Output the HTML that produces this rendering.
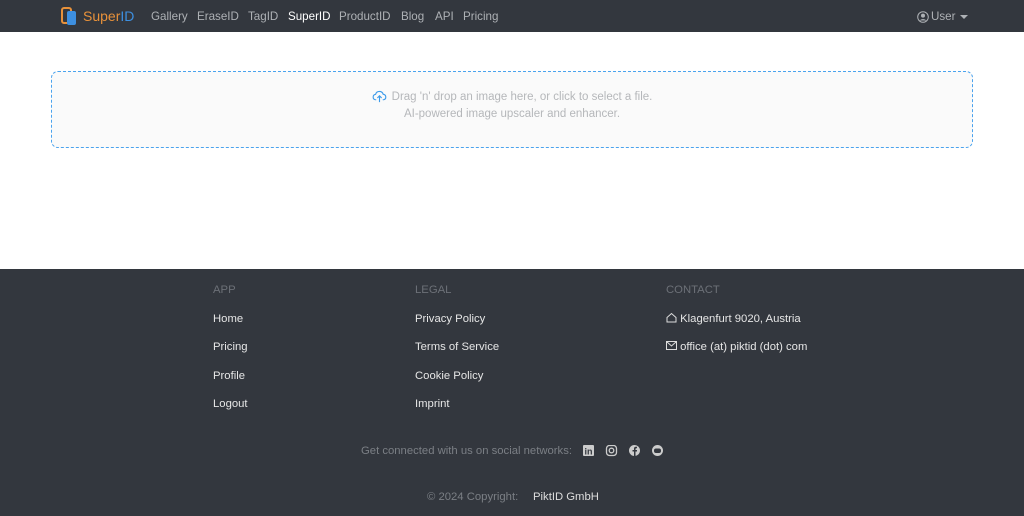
<!DOCTYPE html>
<html><head><style>
*{margin:0;padding:0;box-sizing:border-box}
body{width:1024px;height:516px;overflow:hidden;font-family:"Liberation Sans",sans-serif;background:#fff}
.nav{height:32px;background:#33373e;position:relative;color:#aeb1b5;font-size:11.6px}
.nav .a{position:absolute;top:10px}
.drop{position:absolute;left:51px;top:71px;width:922px;height:77px;border:1.5px dashed #4aa3ee;border-radius:7px;background:#fafafa;text-align:center;color:#b5b7ba;font-size:11.5px}
footer{position:absolute;top:269px;left:0;width:1024px;height:247px;background:#33373e;color:#e6e6e6;font-size:11.3px}
footer .t{position:absolute}
.h{color:#6c7077}
.g{color:#7b7f85}
</style></head><body>
<div class="nav">
<svg style="position:absolute;left:61px;top:7px" width="16" height="19" viewBox="0 0 16 19"><rect x="1" y="1" width="9" height="15" rx="2" fill="none" stroke="#e8913a" stroke-width="2"/><rect x="6" y="4" width="9" height="14" rx="2" fill="#3d8fe0"/></svg>
<span class="a" style="left:83px;top:8px;font-size:14px;color:#e8913a">Super<span style="color:#3d8fe0">ID</span></span>
<span class="a" style="left:151px">Gallery</span>
<span class="a" style="left:197px">EraseID</span>
<span class="a" style="left:248px">TagID</span>
<span class="a" style="left:288px;color:#fff">SuperID</span>
<span class="a" style="left:339px">ProductID</span>
<span class="a" style="left:401px">Blog</span>
<span class="a" style="left:435px">API</span>
<span class="a" style="left:463px">Pricing</span>
<svg style="position:absolute;left:917px;top:11px" width="12" height="12" viewBox="0 0 12 12"><circle cx="6" cy="6" r="5.3" fill="none" stroke="#aeb1b5"/><circle cx="6" cy="4.6" r="2" fill="#aeb1b5"/><path d="M2.5 9.5Q6 6.5 9.5 9.5" fill="#aeb1b5"/></svg>
<span class="a" style="left:931px">User</span>
<span class="a" style="left:960px;top:15px;width:0;height:0;border-left:4px solid transparent;border-right:4px solid transparent;border-top:4px solid #aeb1b5"></span>
</div>
<div class="drop">
<div style="margin-top:18px"><svg style="vertical-align:-3px;margin-right:5px" width="15" height="13" viewBox="0 0 16 14"><path d="M4.5 10.5H3.5A3 3 0 0 1 3.8 4.6 4.3 4.3 0 0 1 12 4.6 3 3 0 0 1 12.5 10.5H11.5M8 13V6.5M5.7 8.6 8 6.3 10.3 8.6" fill="none" stroke="#3c9bea" stroke-width="1.2"/></svg>Drag 'n' drop an image here, or click to select a file.</div>
<div style="margin-top:5px">AI-powered image upscaler and enhancer.</div>
</div>
<footer>
<span class="t h" style="left:213px;top:15px">APP</span>
<span class="t" style="left:213px;top:44px">Home</span>
<span class="t" style="left:213px;top:72px">Pricing</span>
<span class="t" style="left:213px;top:101px">Profile</span>
<span class="t" style="left:213px;top:129px">Logout</span>
<span class="t h" style="left:415px;top:15px">LEGAL</span>
<span class="t" style="left:415px;top:44px">Privacy Policy</span>
<span class="t" style="left:415px;top:72px">Terms of Service</span>
<span class="t" style="left:415px;top:101px">Cookie Policy</span>
<span class="t" style="left:415px;top:129px">Imprint</span>
<span class="t h" style="left:666px;top:15px">CONTACT</span>
<span class="t" style="left:666px;top:43px"><svg width="11" height="11" viewBox="0 0 11 11" style="vertical-align:-1px"><path d="M1 5.5 5.5 1.5 10 5.5V10H1Z" fill="none" stroke="#ddd"/></svg> Klagenfurt 9020, Austria</span>
<span class="t" style="left:666px;top:72px"><svg width="11" height="9" viewBox="0 0 11 9" style="vertical-align:0"><rect x=".5" y=".5" width="10" height="8" fill="none" stroke="#ddd"/><path d="M.5 .5 5.5 5 10.5 .5" fill="none" stroke="#ddd"/></svg> office (at) piktid (dot) com</span>
<span class="t g" style="left:361px;top:176px">Get connected with us on social networks:</span>
<svg class="t" style="left:583px;top:176px" width="82" height="12" viewBox="0 0 82 12">
<rect x="0" y="0" width="11" height="11" rx="1" fill="#ccc"/><text x="1.5" y="9.5" font-size="9" font-weight="bold" fill="#33373e" font-family="Liberation Sans">in</text>
<rect x="23.5" y=".5" width="10" height="10" rx="3" fill="none" stroke="#ccc" stroke-width="1.3"/><circle cx="28.5" cy="5.5" r="2.3" fill="none" stroke="#ccc" stroke-width="1.3"/>
<circle cx="51.5" cy="5.5" r="5.5" fill="#ccc"/><path d="M52.5 11V6.5H54V5H52.5V4Q52.5 3.2 53.3 3.2H54V1.8H52.8Q51 1.8 51 3.7V5H49.5V6.5H51V11Z" fill="#33373e"/>
<circle cx="74.5" cy="5.5" r="5.5" fill="#ccc"/><rect x="71" y="3.5" width="7" height="4.5" rx="2" fill="#33373e"/>
</svg>
<span class="t g" style="left:427px;top:222px">© 2024 Copyright:</span>
<span class="t" style="left:533px;top:222px;color:#ddd">PiktID GmbH</span>
</footer>
</body></html>
